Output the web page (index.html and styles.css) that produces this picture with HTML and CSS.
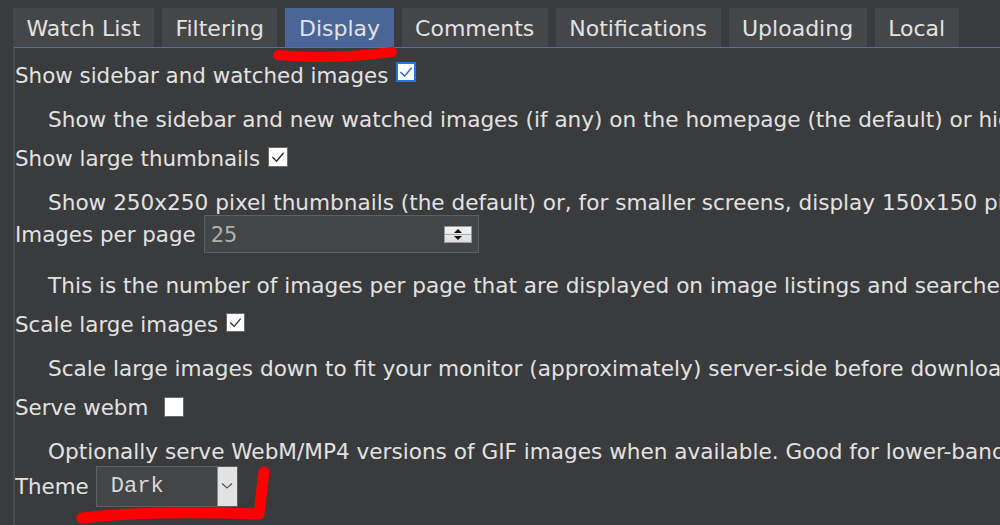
FILE: index.html
```html
<!DOCTYPE html>
<html lang="en">
<head>
    <meta charset="UTF-8">
    <meta name="viewport" content="width=device-width, initial-scale=1.0">
    <title>Settings</title>
    <link rel="stylesheet" href="styles.css">
</head>
<body>
    <nav class="tabs">
        <a class="tab">Watch List</a>
        <a class="tab">Filtering</a>
        <a class="tab active">Display</a>
        <a class="tab">Comments</a>
        <a class="tab">Notifications</a>
        <a class="tab">Uploading</a>
        <a class="tab">Local</a>
    </nav>

    <div class="panel">
        <div class="field-row">
            <span>Show sidebar and watched images</span>
            <span class="checkbox focused">
                <svg viewBox="0 0 20 20" width="14" height="14"><path d="M2 10 L8 16 L18 4" fill="none" stroke="#1a6ed8" stroke-width="2"/></svg>
            </span>
        </div>
        <p class="help">Show the sidebar and new watched images (if any) on the homepage (the default) or hide them.</p>

        <div class="field-row">
            <span>Show large thumbnails</span>
            <span class="checkbox">
                <svg viewBox="0 0 20 20" width="14" height="14"><path d="M2 10 L8 16 L18 4" fill="none" stroke="#2a2a2a" stroke-width="2"/></svg>
            </span>
        </div>
        <p class="help">Show 250x250 pixel thumbnails (the default) or, for smaller screens, display 150x150 pixel thumbnails.</p>

        <div class="field-row with-control">
            <span>Images per page</span>
            <div class="number-input">
                <span class="value">25</span>
                <span class="spinner">
                    <svg viewBox="0 0 26 15" width="26" height="15">
                        <path d="M13 2 L17 6 L9 6 Z" fill="#111"/>
                        <path d="M13 13 L17 9 L9 9 Z" fill="#111"/>
                    </svg>
                </span>
            </div>
        </div>
        <p class="help">This is the number of images per page that are displayed on image listings and searches.</p>

        <div class="field-row">
            <span>Scale large images</span>
            <span class="checkbox small">
                <svg viewBox="0 0 20 20" width="13" height="13"><path d="M2 10 L8 16 L18 4" fill="none" stroke="#2a2a2a" stroke-width="2"/></svg>
            </span>
        </div>
        <p class="help">Scale large images down to fit your monitor (approximately) server-side before downloading.</p>

        <div class="field-row">
            <span>Serve webm</span>
            <span class="checkbox wide-gap"></span>
        </div>
        <p class="help">Optionally serve WebM/MP4 versions of GIF images when available. Good for lower-bandwidth connections.</p>

        <div class="field-row with-select">
            <span>Theme</span>
            <div class="select">
                <span class="value">Dark</span>
                <span class="arrow">
                    <svg viewBox="0 0 12 8" width="12" height="8"><path d="M1 1.5 L6 6 L11 1.5" fill="none" stroke="#555" stroke-width="1.2"/></svg>
                </span>
            </div>
        </div>
    </div>

    <svg class="marks" width="1000" height="525" viewBox="0 0 1000 525">
        <path d="M278 55 Q330 60 392 52" fill="none" stroke="#f00" stroke-width="10" stroke-linecap="round"/>
        <path d="M82 518 Q150 510 259 514 L264 472" fill="none" stroke="#f00" stroke-width="11" stroke-linecap="round" stroke-linejoin="round"/>
    </svg>
</body>
</html>
```

FILE: styles.css
```css
body {
    margin: 0;
    padding: 8px 0 0 13px;
    background-color: #3a3b3d;
    color: #e2e2e2;
    font-family: "DejaVu Sans", Verdana, sans-serif;
    font-size: 21.4px;
    overflow: hidden;
    height: 525px;
    box-sizing: border-box;
}
.tabs {
    display: flex;
    gap: 8px;
    white-space: nowrap;
    font-size: 22px;
}
.tab {
    display: block;
    height: 39px;
    line-height: 37px;
    padding: 2px 13.5px 0;
    box-sizing: border-box;
    background-color: #454648;
    flex-shrink: 0;
}
.tab.active {
    background-color: #4a6597;
}
.panel {
    border-top: 1px solid #5571a6;
    border-left: 2px solid #4b4c4e;
    height: 600px;
    white-space: nowrap;
    overflow: hidden;
}
.field-row {
    display: flex;
    align-items: center;
    height: 30px;
    margin-top: 12px;
}
.help {
    margin: 17px 0 0 33px;
    line-height: 26px;
    font-size: 21.6px;
}
.help + .field-row {
    margin-top: 10px;
}
.with-control {
    height: 40px;
}
.help + .with-control {
    margin-top: -2px;
}
.help + .with-select {
    margin-top: 0;
}
.with-control + .help {
    margin-top: 19px;
}
.with-select {
    height: 42px;
}
.checkbox {
    display: flex;
    align-items: center;
    justify-content: center;
    width: 18px;
    height: 18px;
    margin: -3px 0 0 8px;
    background-color: #fff;
    border: 1px solid #6a6a6a;
}
.checkbox.focused {
    width: 16px;
    height: 16px;
    border: 2px solid #2277e0;
    margin-top: -6px;
}
.checkbox.small {
    width: 17px;
    height: 17px;
    margin-top: -4px;
}
.checkbox.wide-gap {
    margin-left: 16px;
    margin-top: -1px;
}
.number-input {
    display: flex;
    align-items: center;
    justify-content: space-between;
    width: 261px;
    height: 36px;
    margin-left: 8px;
    padding: 0 6px 0 6px;
    background-color: #444547;
    border: 1px solid #5e5f61;
    box-sizing: content-box;
}
.number-input .value {
    font-family: "DejaVu Sans Mono", monospace;
    font-size: 22px;
    color: #b0b0b0;
}
.spinner {
    display: flex;
    width: 26px;
    height: 15px;
    background: linear-gradient(#f4f4f4, #dcdcdc);
    border: 1px solid #9a9a9a;
    position: relative;
}
.spinner::after {
    content: "";
    position: absolute;
    left: 0;
    right: 0;
    top: 7px;
    border-top: 1px solid #a8a8a8;
}
.select {
    display: flex;
    align-items: stretch;
    width: 140px;
    height: 39px;
    margin-left: 7px;
    background-color: #444547;
    border: 1px solid #5e5f61;
}
.select .value {
    flex: 1;
    display: flex;
    align-items: center;
    padding-left: 14px;
    font-family: "Liberation Mono", "Courier New", monospace;
    font-size: 22px;
    color: #d8d8d8;
}
.select .arrow {
    display: flex;
    align-items: center;
    justify-content: center;
    width: 19px;
    background-color: #e2e2e2;
    border-left: 1px solid #8a8a8a;
}
.marks {
    position: absolute;
    left: 0;
    top: 0;
    pointer-events: none;
}
```
